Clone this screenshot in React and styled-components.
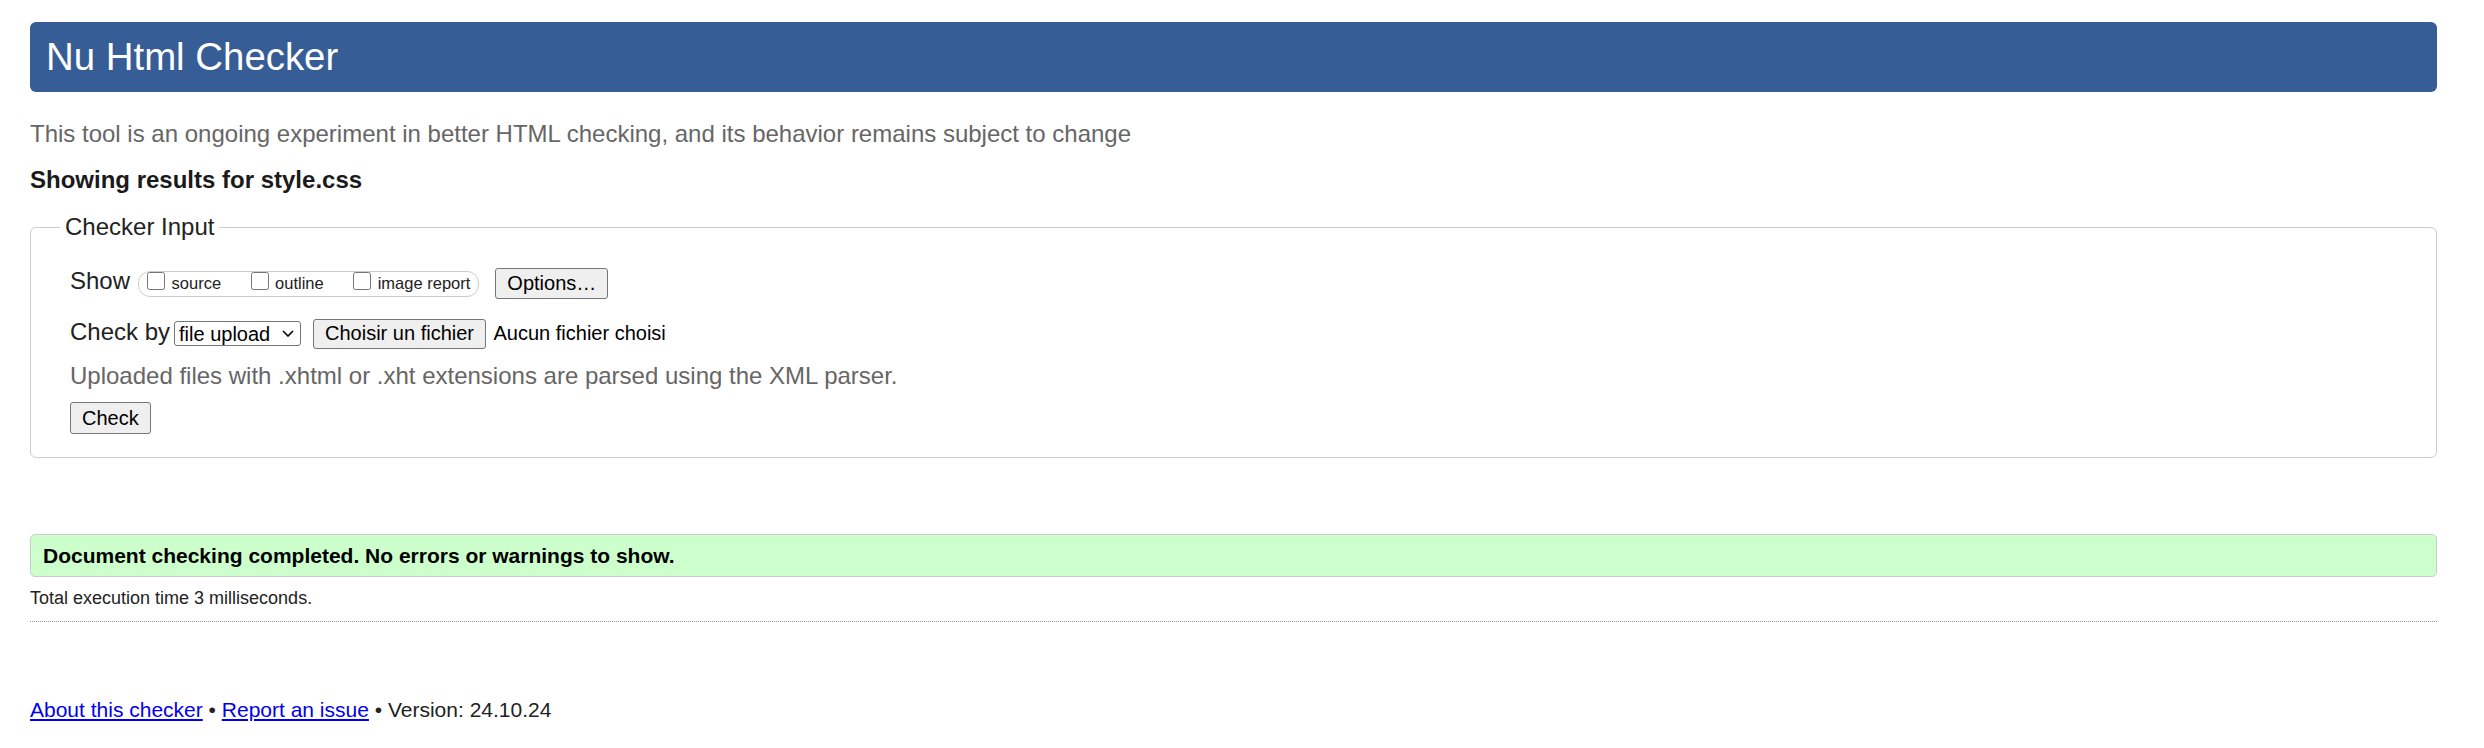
import React from "react";
import styled, { createGlobalStyle } from "styled-components";

const GlobalStyle = createGlobalStyle`
  html, body {
    margin: 0;
    padding: 0;
    background: #fff;
  }
  body {
    font-family: "Liberation Sans", Arial, sans-serif;
    font-size: 24px;
    color: #222;
  }
`;

const Page = styled.div`
  padding: 22px 47px 30px 30px;
`;

const Title = styled.h1`
  margin: 0;
  height: 70px;
  line-height: 70px;
  padding: 0 16px;
  font-size: 38.4px;
  font-weight: normal;
  color: #fff;
  background: #365d95;
  border-radius: 6px;
`;

const Intro = styled.p`
  margin: 27.5px 0 0;
  color: #666;
`;

const ResultsFor = styled.p`
  margin: 18px 0 0;
  font-weight: bold;
  color: #1a1a1a;
`;

const Fieldset = styled.fieldset`
  margin: 19.5px 0 0;
  min-width: 0;
  border: 1px solid #ccc;
  border-radius: 6px;
  padding: 0 39px 23px 39px;
`;

const Legend = styled.legend`
  margin-left: -10px;
  padding: 0 5px;
  color: #222;
`;

const Row = styled.div`
  display: flex;
  align-items: center;
  margin-top: ${(props) => props.top}px;
`;

const Label = styled.span`
  padding-bottom: ${(props) => props.lift || 0}px;
`;

const CheckGroup = styled.span`
  display: flex;
  align-items: center;
  gap: 29.5px;
  height: 24px;
  margin-left: 8px;
  padding: 0 8px;
  border: 1px solid #ccc;
  border-radius: 12px;
`;

const CheckItem = styled.label`
  display: flex;
  align-items: center;
  gap: 6.5px;
  font-size: 16.5px;
  line-height: 19px;
  color: #222;
`;

const Box = styled.input`
  width: 18px;
  height: 18px;
  margin: 0 0 6px 0;
`;

const Button = styled.button`
  font-family: "Liberation Sans", Arial, sans-serif;
  font-size: 20px;
  height: ${(props) => props.h || 31}px;
  padding: 0 11px;
  margin-left: ${(props) => props.left || 0}px;
  color: #000;
  background: #efefef;
  border: 1px solid #767676;
  border-radius: 3px;
`;

const SelectWrap = styled.span`
  position: relative;
  display: inline-flex;
  margin-left: 4px;
`;

const Select = styled.select`
  appearance: none;
  font-family: "Liberation Sans", Arial, sans-serif;
  font-size: 20px;
  width: 127px;
  height: 25px;
  padding: 0 24px 0 4px;
  color: #000;
  background: #fff;
  border: 1px solid #767676;
  border-radius: 3px;
`;

const Chevron = styled.svg`
  position: absolute;
  right: 7px;
  top: 9px;
  pointer-events: none;
`;

const NoFile = styled.span`
  margin-left: 7.5px;
  font-size: 20px;
  color: #000;
`;

const Hint = styled.div`
  margin-top: 13px;
  color: #666;
`;

const Success = styled.div`
  margin-top: 76px;
  height: 41px;
  line-height: 41px;
  padding: 0 12px;
  font-size: 21px;
  font-weight: bold;
  color: #000;
  background: #ccffcc;
  border: 1px solid #ccc;
  border-radius: 5px;
`;

const Timing = styled.p`
  margin: 10.7px 0 0;
  font-size: 18px;
  color: #222;
`;

const Rule = styled.hr`
  margin: 11.6px 0 0;
  border: none;
  border-top: 1px dotted #999;
`;

const Footer = styled.p`
  margin: 76px 0 0;
  font-size: 21px;
  color: #222;

  a {
    color: #0000ee;
    text-decoration: underline;
  }
`;

export default function App() {
  return (
    <Page>
      <GlobalStyle />
      <Title>Nu Html Checker</Title>
      <Intro>
        This tool is an ongoing experiment in better HTML checking, and its
        behavior remains subject to change
      </Intro>
      <ResultsFor>Showing results for style.css</ResultsFor>

      <Fieldset>
        <Legend>Checker Input</Legend>

        <Row top={26.4}>
          <Label lift={5}>Show</Label>
          <CheckGroup>
            <CheckItem>
              <Box type="checkbox" />
              source
            </CheckItem>
            <CheckItem>
              <Box type="checkbox" />
              outline
            </CheckItem>
            <CheckItem>
              <Box type="checkbox" />
              image report
            </CheckItem>
          </CheckGroup>
          <Button left={16}>Options…</Button>
        </Row>

        <Row top={18}>
          <Label lift={3}>Check by</Label>
          <SelectWrap>
            <Select defaultValue="file">
              <option value="address">address</option>
              <option value="file">file upload</option>
              <option value="text">text input</option>
            </Select>
            <Chevron width="12" height="7" viewBox="0 0 12 7">
              <path d="M1 1l5 5 5-5" fill="none" stroke="#000" strokeWidth="1.6" />
            </Chevron>
          </SelectWrap>
          <Button left={12} h={30}>
            Choisir un fichier
          </Button>
          <NoFile>Aucun fichier choisi</NoFile>
        </Row>

        <Hint>
          Uploaded files with .xhtml or .xht extensions are parsed using the XML
          parser.
        </Hint>

        <Row top={12}>
          <Button h={32}>Check</Button>
        </Row>
      </Fieldset>

      <Success>Document checking completed. No errors or warnings to show.</Success>
      <Timing>Total execution time 3 milliseconds.</Timing>
      <Rule />

      <Footer>
        <a href="#about">About this checker</a> •{" "}
        <a href="#issue">Report an issue</a> • Version: 24.10.24
      </Footer>
    </Page>
  );
}
